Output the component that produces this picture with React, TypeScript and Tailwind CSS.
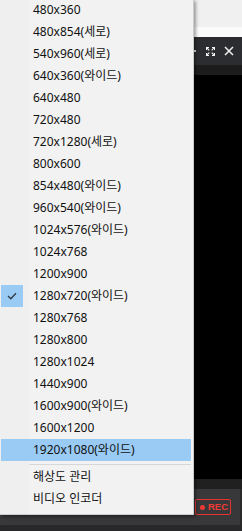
import React from 'react';

const FONT = '"Noto Sans", "Noto Sans CJK KR", sans-serif';

const RESOLUTIONS = [
  '480x360',
  '480x854(세로)',
  '540x960(세로)',
  '640x360(와이드)',
  '640x480',
  '720x480',
  '720x1280(세로)',
  '800x600',
  '854x480(와이드)',
  '960x540(와이드)',
  '1024x576(와이드)',
  '1024x768',
  '1200x900',
  '1280x720(와이드)',
  '1280x768',
  '1280x800',
  '1280x1024',
  '1440x900',
  '1600x900(와이드)',
  '1600x1200',
  '1920x1080(와이드)',
];

const CHECKED = '1280x720(와이드)';
const HOVERED = '1920x1080(와이드)';

function MenuItem({ label, checked, hovered }: { label: string; checked?: boolean; hovered?: boolean }) {
  return (
    <div
      className={`ml-[1px] mr-[2px] h-[22px] flex items-center ${hovered ? 'bg-[#99cbf5]' : ''}`}
    >
      <div
        className={`w-[22px] h-[22px] flex items-center justify-center shrink-0 ${
          checked ? 'bg-[#99cbf5]' : ''
        }`}
      >
        {checked && (
          <svg width="10" height="8" viewBox="0 0 10 8" fill="none">
            <path d="M1 4 L3.8 6.8 L9 1.2" stroke="#2f3b45" strokeWidth="1.3" />
          </svg>
        )}
      </div>
      <span className="ml-[10px] text-[12px] leading-none text-[#111]">{label}</span>
    </div>
  );
}

export default function App() {
  return (
    <div className="relative w-[242px] h-[531px] overflow-hidden" style={{ fontFamily: FONT }}>
      {/* Background app window */}
      <div className="flex flex-col h-full">
        <div className="h-[27px] bg-[#f0f0f0]" />
        <div className="h-[10px] bg-[#fbfbfb]" />
        <div className="h-[28px] bg-[#2c2d30] flex items-center justify-end pr-[8px]">
          <div className="w-[10px] h-[1.5px] bg-[#e8e8e8] mr-[10px]" />
          <svg width="9" height="9" viewBox="0 0 9 9" fill="none" className="mr-[9px]">
            <path
              d="M0.5 3 V0.5 H3 M6 0.5 H8.5 V3 M8.5 6 V8.5 H6 M3 8.5 H0.5 V6 M1 1 L3.3 3.3 M8 1 L5.7 3.3 M8 8 L5.7 5.7 M1 8 L3.3 5.7"
              stroke="#f2f2f2"
              strokeWidth="1.1"
            />
          </svg>
          <svg width="10" height="10" viewBox="0 0 10 10" fill="none">
            <path d="M1 1 L9 9 M9 1 L1 9" stroke="#f2f2f2" strokeWidth="1.5" />
          </svg>
        </div>
        <div className="h-[10px] bg-[#1c1c1d]" />
        <div className="flex-1 bg-black" />
        <div className="h-[10px] bg-[#202021]" />
        <div className="h-[36px] bg-[#38383a] flex items-center justify-end pr-[9px] border-r-[2px] border-[#2a2a2b]">
          <div className="w-[36px] h-[16px] border border-[#e5332e] rounded-[2px] flex items-center pl-[4px] gap-[3px]">
            <div className="w-[5px] h-[5px] rounded-full bg-[#ee3a33] shrink-0" />
            <span
              className="text-[9.5px] leading-none font-bold whitespace-nowrap text-[#f03c35]"
              style={{ fontFamily: '"Liberation Sans", sans-serif' }}
            >
              REC
            </span>
          </div>
        </div>
        <div className="h-[6px] bg-[#28282a]" />
      </div>

      {/* Dropdown menu */}
      <div className="absolute left-0 top-[-1px] w-[194px] bg-[#f2f2f2] border-r border-b border-[#cccccc] pb-[4px] shadow-[2px_2px_3px_rgba(0,0,0,0.35)]">
        <div className="absolute left-0 top-0 bottom-0 w-[29px] bg-[#efefef]" />
        <div className="relative">
          {RESOLUTIONS.map((r) => (
            <MenuItem key={r} label={r} checked={r === CHECKED} hovered={r === HOVERED} />
          ))}
          <div className="h-[5px] pt-[3px] pl-[29px] pr-[2px]">
            <div className="h-[1px] bg-[#d7d7d7]" />
          </div>
          <MenuItem label="해상도 관리" />
          <MenuItem label="비디오 인코더" />
        </div>
      </div>
    </div>
  );
}
